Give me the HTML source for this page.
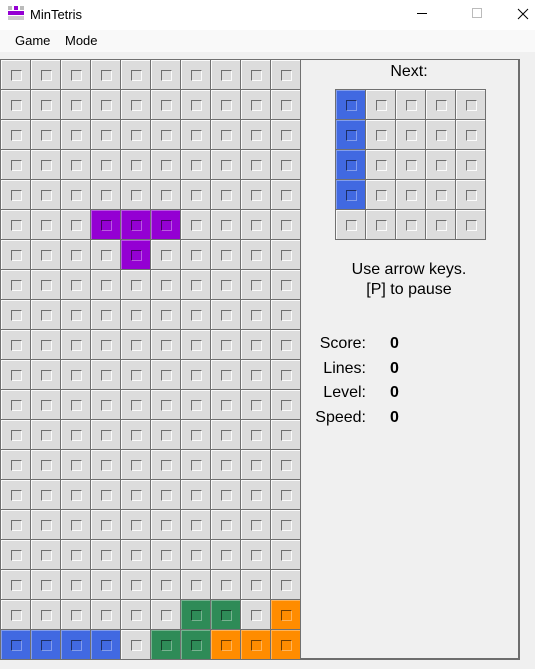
<!DOCTYPE html>
<html><head><style>
body{margin:0;width:535px;height:669px;background:#f0f0f0;font-family:"Liberation Sans",Arial,sans-serif;position:relative;overflow:hidden}
.title{position:absolute;left:0;top:0;width:535px;height:30px;background:#fff}
.menu{position:absolute;left:0;top:30px;width:535px;height:22px;background:#f9f9f9;font-size:13px}
.menu span{position:absolute;top:3px}
.board{position:absolute;left:0;top:59px;width:301px;height:601px;background:#707070}
.next{position:absolute;left:335px;top:89px;width:151px;height:151px;background:#707070}
.c{position:absolute;width:28px;height:28px;border-top:1px solid rgba(255,255,255,.85);border-left:1px solid rgba(255,255,255,.85);background:#dcdcdc}
.c i{position:absolute;left:9px;top:9px;width:9px;height:9px;border-top:1px solid rgba(0,0,0,.5);border-left:1px solid rgba(0,0,0,.5);border-bottom:1px solid rgba(255,255,255,.9);border-right:1px solid rgba(255,255,255,.9)}
.c.k{border-color:rgba(255,255,255,.35)}
.c.k i{border-top-color:rgba(0,0,0,.55);border-left-color:rgba(0,0,0,.55);border-bottom-color:rgba(255,255,255,.35);border-right-color:rgba(255,255,255,.35)}
.panel{position:absolute;left:300px;top:59px;width:218px;height:598px;border:1px solid #6d6d6d;border-left:none;border-right:2px solid #6d6d6d;border-bottom:2px solid #6d6d6d}
.t{position:absolute;font-size:16px;color:#000}
</style></head><body>
<div class="title">
<svg style="position:absolute;left:8px;top:6px" width="16" height="14"><rect x="0" y="0" width="4" height="4" fill="#bbb"/><rect x="6" y="0" width="4" height="4" fill="#9400d3"/><rect x="12" y="0" width="4" height="4" fill="#bbb"/><rect x="0" y="5" width="16" height="4" fill="#9400d3"/><rect x="0" y="10" width="16" height="4" fill="#ccc"/></svg>
<span style="position:absolute;left:30px;top:7px;font-size:13px">MinTetris</span>
<svg style="position:absolute;left:410px;top:6px" width="120" height="16"><line x1="7" y1="7.5" x2="17" y2="7.5" stroke="#000"/><rect x="62.5" y="2.5" width="9" height="9" fill="none" stroke="#bbb"/><path d="M108 3 L118 13 M118 3 L108 13" stroke="#000"/></svg>
</div>
<div class="menu"><span style="left:15px">Game</span><span style="left:65px">Mode</span></div>
<div class="board" id="b"></div>
<div class="panel"></div>
<div class="next" id="n"></div>
<div class="t" style="left:300px;width:218px;text-align:center;top:63px">Next:</div>
<div class="t" style="left:300px;width:218px;text-align:center;top:260px;line-height:20px">Use arrow keys.<br>[P] to pause</div>
<div class="t" style="left:300px;width:66px;text-align:right;top:332px;line-height:24.7px">Score:<br>Lines:<br>Level:<br>Speed:</div>
<div class="t" style="left:390px;top:332px;line-height:24.7px;font-weight:bold">0<br>0<br>0<br>0</div>
<script>
var P='#9400d3',B='#4169e1',G='#2e8b57',O='#ff8c00';
var m={'5,3':P,'5,4':P,'5,5':P,'6,4':P,'18,6':G,'18,7':G,'18,9':O,'19,0':B,'19,1':B,'19,2':B,'19,3':B,'19,5':G,'19,6':G,'19,7':O,'19,8':O,'19,9':O};
function mk(el,rows,cols,map){var h='';for(var r=0;r<rows;r++)for(var c=0;c<cols;c++){var col=map[r+','+c];h+='<div class="c'+(col?' k':'')+'" style="left:'+(c*30+1)+'px;top:'+(r*30+1)+'px'+(col?';background:'+col:'')+'"><i></i></div>';}el.innerHTML=h;}
mk(document.getElementById('b'),20,10,m);
mk(document.getElementById('n'),5,5,{'0,0':B,'1,0':B,'2,0':B,'3,0':B});
</script>
</body></html>
